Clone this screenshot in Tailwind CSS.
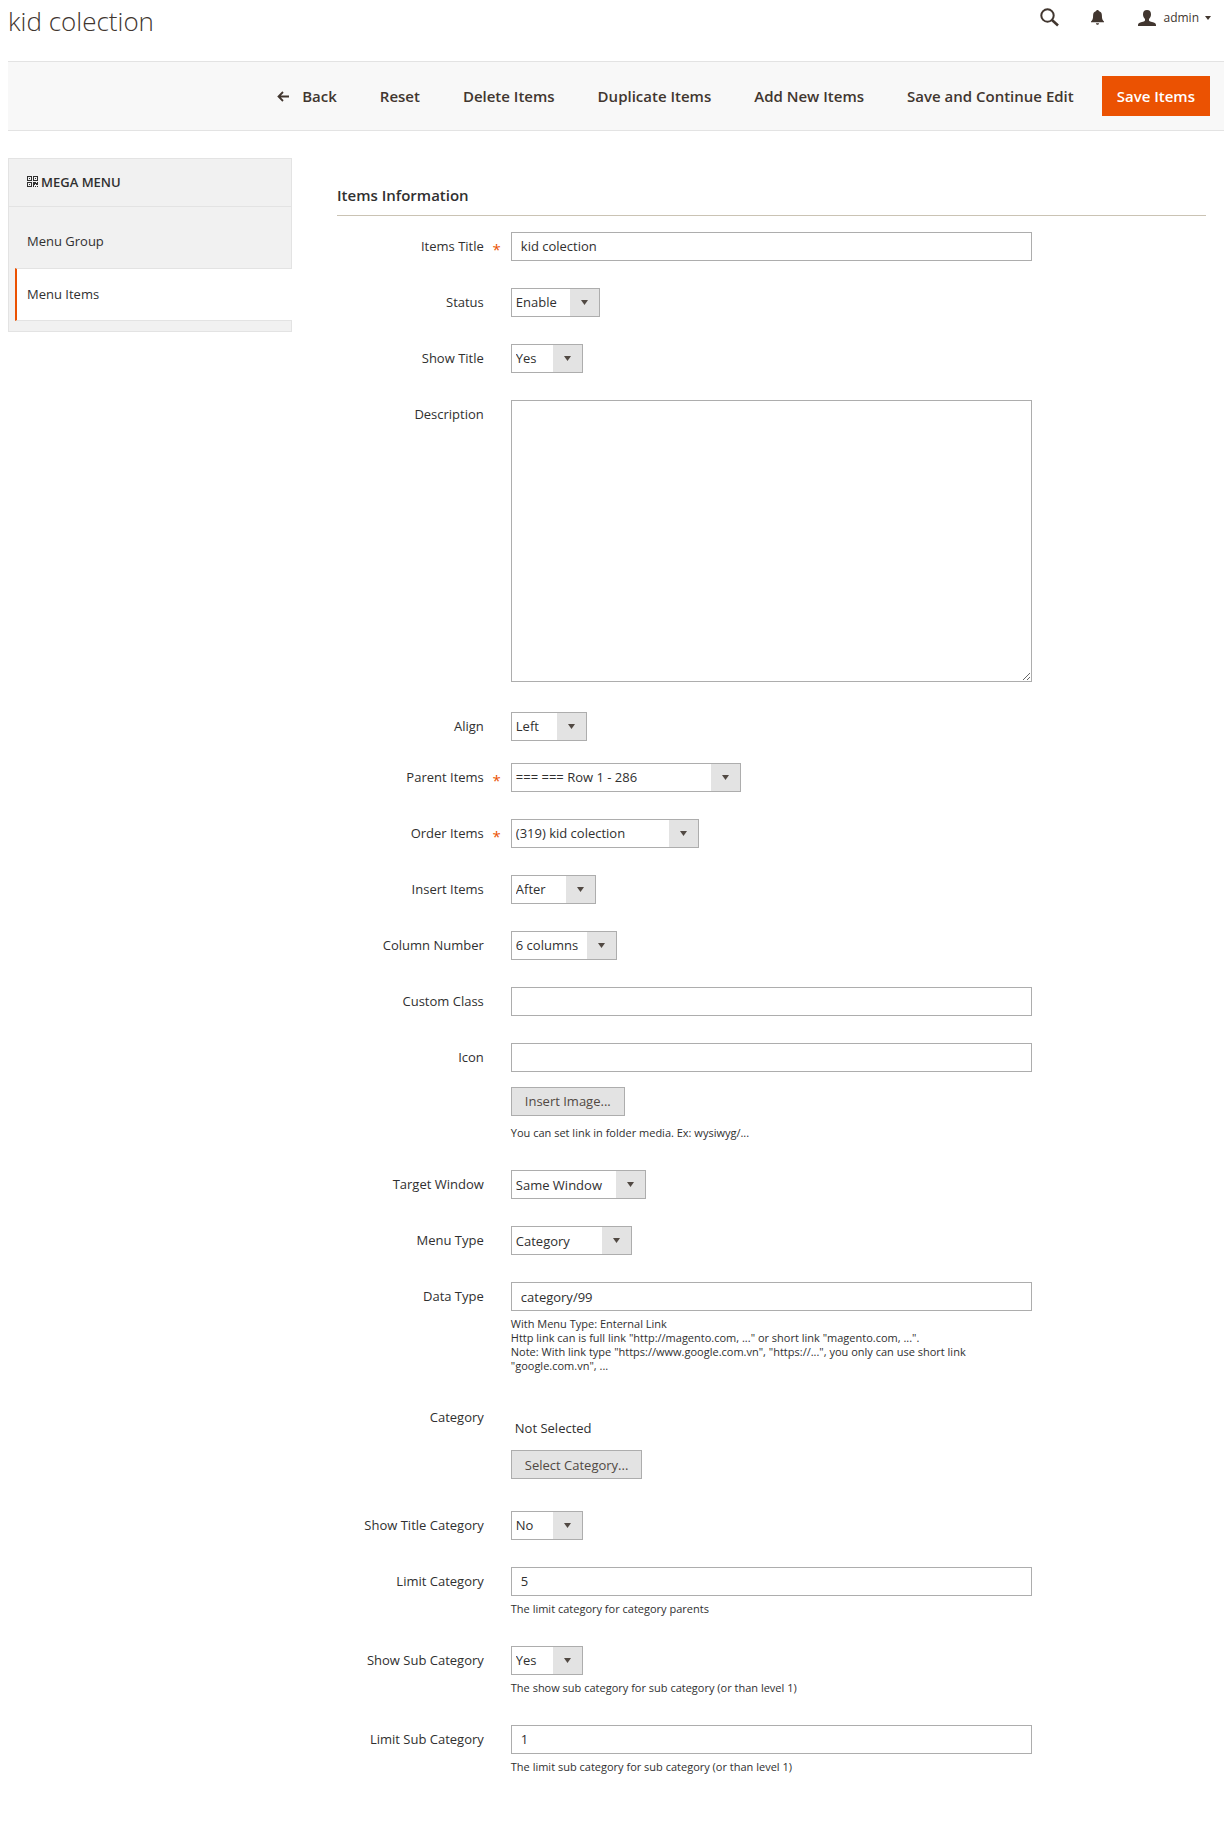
<!DOCTYPE html>
<html lang="en">
<head>
  <meta charset="UTF-8">
  <meta name="viewport" content="width=device-width, initial-scale=1.0">
  <title>kid colection</title>
  <script src="https://cdn.jsdelivr.net/npm/@tailwindcss/browser@4"></script>
</head>
<body class="bg-white font-['Open_Sans','Noto_Sans',sans-serif] text-[13px] leading-[18px] text-[#303030]">
  <!-- Page header -->
  <header class="flex h-[61px] items-start justify-between pl-2 pr-[15px]">
    <h1 class="pt-[3px] text-[26px] font-light leading-9 text-[#41362f]">kid colection</h1>
    <div class="flex items-center pt-2 text-[#41362f]">
      <button type="button" aria-label="Search" class="mr-8">
        <svg class="size-[19px]" viewBox="0 0 19 19" fill="none" stroke="currentColor"><circle cx="7.5" cy="7.5" r="6.2" stroke-width="2"/><path d="M12 12l6 5.5" stroke-width="2.6"/></svg>
      </button>
      <button type="button" aria-label="Notifications" class="mr-[34px]">
        <svg class="h-[15px] w-[13px]" viewBox="0 0 13 15" fill="currentColor"><path d="M6.500 0c.8 0 1.300.5 1.300 1.100 2 .6 3.100 2.200 3.100 4.300 0 3.300.6 5 2.100 6v.9H0v-.9c1.500-1 2.100-2.700 2.100-6 0-2.100 1.100-3.700 3.100-4.300C5.200.5 5.700 0 6.500 0zM4.900 13.200h3.200c0 .9-.7 1.500-1.600 1.500s-1.600-.6-1.600-1.500z"/></svg>
      </button>
      <button type="button" class="flex items-center">
        <svg class="mr-[7px] h-[16px] w-[18px]" viewBox="0 0 18 16" fill="currentColor"><path d="M9 0c2.600 0 4 1.600 4 4.200 0 1.900-.8 3.700-2 4.700v1.300c0 .6.400.9 1.200 1.200l3.600 1.200c1.500.5 2.200 1.300 2.200 2.700v.7H0v-.7c0-1.400.7-2.200 2.200-2.700l3.600-1.200c.8-.3 1.200-.6 1.200-1.200V8.900c-1.200-1-2-2.800-2-4.700C5 1.600 6.400 0 9 0z"/></svg>
        <span class="text-xs">admin</span>
        <svg class="ml-[6px] h-[4px] w-[6px]" viewBox="0 0 6 4" fill="currentColor"><path d="M0 0h6L3 4z"/></svg>
      </button>
    </div>
  </header>

  <!-- Actions toolbar -->
  <div class="ml-2 mr-[2px] flex h-[70px] items-center justify-end border-y border-[#e3e3e3] bg-[#f8f8f8] pr-[14px] text-[15px] font-semibold text-[#41362f]">
    <div class="mr-7 flex items-center gap-[43px]">
      <button type="button" class="flex items-center">
        <svg class="mr-[13px] h-[11px] w-[12px]" viewBox="0 0 12 11" fill="none" stroke="currentColor" stroke-width="1.800"><path d="M12 5.500H1.500M6 1L1.500 5.500 6 10"/></svg>
        Back
      </button>
      <button type="button">Reset</button>
      <button type="button">Delete Items</button>
      <button type="button">Duplicate Items</button>
      <button type="button">Add New Items</button>
      <button type="button">Save and Continue Edit</button>
    </div>
    <button type="button" class="h-10 bg-[#eb5202] px-[15px] text-white">Save Items</button>
  </div>

  <div class="flex items-start pl-2 pr-5 pt-[27px]">
    <!-- Side menu -->
    <nav class="w-[284px] shrink-0 border border-[#e3e3e3] bg-[#f1f1f1] pb-[10px]">
      <h2 class="flex h-12 items-center gap-[3px] border-b border-[#e3e3e3] pb-[2px] pl-[18px] font-semibold">
        <svg class="size-[11px]" viewBox="0 0 11 11" fill="currentColor"><path fill-rule="evenodd" d="M0 0h5v5H0zM1 1v3h3V1zM6 0h5v5H6zM7 1v3h3V1zM0 6h5v5H0zM1 7v3h3V7zM2 2h1v1H2zM8 2h1v1H8zM2 8h1v1H2zM6 6h3v1h1V6h1v3H9V8H8v1H7v2H6zM8 10h1v1H8zM10 10h1v1h-1z"/></svg>
        MEGA MENU
      </h2>
      <a href="#" class="mt-[9px] flex h-[52px] items-center pb-[2px] pl-[18px]">Menu Group</a>
      <a href="#" class="-mr-px ml-[6px] flex h-[53px] items-center border-y border-l-2 border-y-[#e3e3e3] border-l-[#eb5202] bg-white pb-[2px] pl-[10px] font-medium">Menu Items</a>
    </nav>

    <!-- Item form -->
    <form class="ml-[45px] min-w-0 flex-1 pt-[27px]">
      <h2 class="mb-4 flex h-[31px] items-start border-b border-[#cac3b4] text-[15px] leading-5 font-semibold">Items Information</h2>

      <div class="mb-[27px] flex">
        <label for="title" class="relative w-1/5 pr-[27px] pt-[5px] text-right font-medium">Items Title<span class="absolute right-[10px] top-[8px] text-[15px] font-normal text-[#eb5202]">*</span></label>
        <input id="title" type="text" value="kid colection" class="h-[29px] w-3/5 border border-[#adadad] px-[9px] pb-[2px]">
      </div>

      <div class="mb-[27px] flex">
        <label for="status" class="w-1/5 pr-[27px] pt-[5px] text-right font-medium">Status</label>
        <div class="relative h-[29px] w-[89px] border border-[#adadad]">
          <select id="status" class="size-full appearance-none pb-[2px] pl-1"><option>Enable</option><option>Disable</option></select>
          <span class="pointer-events-none absolute inset-y-0 right-0 flex w-[29px] items-center justify-center bg-[#e3e3e3] text-[#514943]"><svg class="h-[5px] w-[7px]" viewBox="0 0 7 5" fill="currentColor"><path d="M0 0h7L3.500 5z"/></svg></span>
        </div>
      </div>

      <div class="mb-[27px] flex">
        <label for="show-title" class="w-1/5 pr-[27px] pt-[5px] text-right font-medium">Show Title</label>
        <div class="relative h-[29px] w-[72px] border border-[#adadad]">
          <select id="show-title" class="size-full appearance-none pb-[2px] pl-1"><option>Yes</option><option>No</option></select>
          <span class="pointer-events-none absolute inset-y-0 right-0 flex w-[29px] items-center justify-center bg-[#e3e3e3] text-[#514943]"><svg class="h-[5px] w-[7px]" viewBox="0 0 7 5" fill="currentColor"><path d="M0 0h7L3.500 5z"/></svg></span>
        </div>
      </div>

      <div class="mb-[30px] flex">
        <label for="description" class="w-1/5 pr-[27px] pt-[5px] text-right font-medium">Description</label>
        <textarea id="description" class="h-[282px] w-3/5 resize border border-[#adadad] px-[9px] py-1"></textarea>
      </div>

      <div class="mb-[22px] flex">
        <label for="align" class="w-1/5 pr-[27px] pt-[5px] text-right font-medium">Align</label>
        <div class="relative h-[29px] w-[76px] border border-[#adadad]">
          <select id="align" class="size-full appearance-none pb-[2px] pl-1"><option>Left</option><option>Right</option></select>
          <span class="pointer-events-none absolute inset-y-0 right-0 flex w-[29px] items-center justify-center bg-[#e3e3e3] text-[#514943]"><svg class="h-[5px] w-[7px]" viewBox="0 0 7 5" fill="currentColor"><path d="M0 0h7L3.500 5z"/></svg></span>
        </div>
      </div>

      <div class="mb-[27px] flex">
        <label for="parent" class="relative w-1/5 pr-[27px] pt-[5px] text-right font-medium">Parent Items<span class="absolute right-[10px] top-[8px] text-[15px] font-normal text-[#eb5202]">*</span></label>
        <div class="relative h-[29px] w-[230px] border border-[#adadad]">
          <select id="parent" class="size-full appearance-none pb-[2px] pl-1"><option>=== === Row 1 - 286</option></select>
          <span class="pointer-events-none absolute inset-y-0 right-0 flex w-[29px] items-center justify-center bg-[#e3e3e3] text-[#514943]"><svg class="h-[5px] w-[7px]" viewBox="0 0 7 5" fill="currentColor"><path d="M0 0h7L3.500 5z"/></svg></span>
        </div>
      </div>

      <div class="mb-[27px] flex">
        <label for="order" class="relative w-1/5 pr-[27px] pt-[5px] text-right font-medium">Order Items<span class="absolute right-[10px] top-[8px] text-[15px] font-normal text-[#eb5202]">*</span></label>
        <div class="relative h-[29px] w-[188px] border border-[#adadad]">
          <select id="order" class="size-full appearance-none pb-[2px] pl-1"><option>(319) kid colection</option></select>
          <span class="pointer-events-none absolute inset-y-0 right-0 flex w-[29px] items-center justify-center bg-[#e3e3e3] text-[#514943]"><svg class="h-[5px] w-[7px]" viewBox="0 0 7 5" fill="currentColor"><path d="M0 0h7L3.500 5z"/></svg></span>
        </div>
      </div>

      <div class="mb-[27px] flex">
        <label for="insert" class="w-1/5 pr-[27px] pt-[5px] text-right font-medium">Insert Items</label>
        <div class="relative h-[29px] w-[85px] border border-[#adadad]">
          <select id="insert" class="size-full appearance-none pb-[2px] pl-1"><option>After</option><option>Before</option></select>
          <span class="pointer-events-none absolute inset-y-0 right-0 flex w-[29px] items-center justify-center bg-[#e3e3e3] text-[#514943]"><svg class="h-[5px] w-[7px]" viewBox="0 0 7 5" fill="currentColor"><path d="M0 0h7L3.500 5z"/></svg></span>
        </div>
      </div>

      <div class="mb-[27px] flex">
        <label for="columns" class="w-1/5 pr-[27px] pt-[5px] text-right font-medium">Column Number</label>
        <div class="relative h-[29px] w-[106px] border border-[#adadad]">
          <select id="columns" class="size-full appearance-none pb-[2px] pl-1"><option>6 columns</option></select>
          <span class="pointer-events-none absolute inset-y-0 right-0 flex w-[29px] items-center justify-center bg-[#e3e3e3] text-[#514943]"><svg class="h-[5px] w-[7px]" viewBox="0 0 7 5" fill="currentColor"><path d="M0 0h7L3.500 5z"/></svg></span>
        </div>
      </div>

      <div class="mb-[27px] flex">
        <label for="custom-class" class="w-1/5 pr-[27px] pt-[5px] text-right font-medium">Custom Class</label>
        <input id="custom-class" type="text" class="h-[29px] w-3/5 border border-[#adadad] px-[9px] pb-[2px]">
      </div>

      <div class="mb-[30px] flex">
        <label for="icon" class="w-1/5 pr-[27px] pt-[5px] text-right font-medium">Icon</label>
        <div class="w-3/5">
          <input id="icon" type="text" class="block h-[29px] w-full border border-[#adadad] px-[9px] pb-[2px]">
          <button type="button" class="mt-[15px] block h-[29px] border border-[#adadad] bg-[#e3e3e3] px-[13px] pb-[2px] font-medium text-[#514943]">Insert Image...</button>
          <p class="mt-[10px] text-[11px] leading-[14px]">You can set link in folder media. Ex: wysiwyg/...</p>
        </div>
      </div>

      <div class="mb-[27px] flex">
        <label for="target" class="w-1/5 pr-[27px] pt-[5px] text-right font-medium">Target Window</label>
        <div class="relative h-[29px] w-[135px] border border-[#adadad]">
          <select id="target" class="size-full appearance-none pl-1"><option>Same Window</option><option>New Window</option></select>
          <span class="pointer-events-none absolute inset-y-0 right-0 flex w-[29px] items-center justify-center bg-[#e3e3e3] text-[#514943]"><svg class="h-[5px] w-[7px]" viewBox="0 0 7 5" fill="currentColor"><path d="M0 0h7L3.500 5z"/></svg></span>
        </div>
      </div>

      <div class="mb-[27px] flex">
        <label for="menu-type" class="w-1/5 pr-[27px] pt-[5px] text-right font-medium">Menu Type</label>
        <div class="relative h-[29px] w-[121px] border border-[#adadad]">
          <select id="menu-type" class="size-full appearance-none pl-1"><option>Category</option><option>External Link</option></select>
          <span class="pointer-events-none absolute inset-y-0 right-0 flex w-[29px] items-center justify-center bg-[#e3e3e3] text-[#514943]"><svg class="h-[5px] w-[7px]" viewBox="0 0 7 5" fill="currentColor"><path d="M0 0h7L3.500 5z"/></svg></span>
        </div>
      </div>

      <div class="mb-[30px] flex">
        <label for="data-type" class="w-1/5 pr-[27px] pt-[5px] text-right font-medium">Data Type</label>
        <div class="w-3/5">
          <input id="data-type" type="text" value="category/99" class="block h-[29px] w-full border border-[#adadad] px-[9px]">
          <p class="mt-[6px] text-[11px] leading-[14px]">With Menu Type: Enternal Link<br>Http link can is full link "http://magento.com, ..." or short link "magento.com, ...".<br>Note: With link type "https://www.google.com.vn", "https://...", you only can use short link<br>"google.com.vn", ...</p>
        </div>
      </div>

      <div class="mb-8 flex">
        <label for="category" class="w-1/5 pr-[27px] pt-[5px] text-right font-medium">Category</label>
        <div class="w-3/5 pt-4">
          <p class="pl-1">Not Selected</p>
          <button id="category" type="button" class="mt-[13px] block h-[29px] border border-[#adadad] bg-[#e3e3e3] px-[13px] font-medium text-[#514943]">Select Category...</button>
        </div>
      </div>

      <div class="mb-[27px] flex">
        <label for="show-title-category" class="w-1/5 pr-[27px] pt-[5px] text-right font-medium">Show Title Category</label>
        <div class="relative h-[29px] w-[72px] border border-[#adadad]">
          <select id="show-title-category" class="size-full appearance-none pb-[2px] pl-1"><option>No</option><option>Yes</option></select>
          <span class="pointer-events-none absolute inset-y-0 right-0 flex w-[29px] items-center justify-center bg-[#e3e3e3] text-[#514943]"><svg class="h-[5px] w-[7px]" viewBox="0 0 7 5" fill="currentColor"><path d="M0 0h7L3.500 5z"/></svg></span>
        </div>
      </div>

      <div class="mb-[30px] flex">
        <label for="limit-category" class="w-1/5 pr-[27px] pt-[5px] text-right font-medium">Limit Category</label>
        <div class="w-3/5">
          <input id="limit-category" type="text" value="5" class="block h-[29px] w-full border border-[#adadad] px-[9px] pb-[2px]">
          <p class="mt-[6px] text-[11px] leading-[14px]">The limit category for category parents</p>
        </div>
      </div>

      <div class="mb-[30px] flex">
        <label for="show-sub" class="w-1/5 pr-[27px] pt-[5px] text-right font-medium">Show Sub Category</label>
        <div class="w-3/5">
          <div class="relative h-[29px] w-[72px] border border-[#adadad]">
            <select id="show-sub" class="size-full appearance-none pb-[2px] pl-1"><option>Yes</option><option>No</option></select>
            <span class="pointer-events-none absolute inset-y-0 right-0 flex w-[29px] items-center justify-center bg-[#e3e3e3] text-[#514943]"><svg class="h-[5px] w-[7px]" viewBox="0 0 7 5" fill="currentColor"><path d="M0 0h7L3.500 5z"/></svg></span>
          </div>
          <p class="mt-[6px] text-[11px] leading-[14px]">The show sub category for sub category (or than level 1)</p>
        </div>
      </div>

      <div class="mb-[30px] flex">
        <label for="limit-sub" class="w-1/5 pr-[27px] pt-[5px] text-right font-medium">Limit Sub Category</label>
        <div class="w-3/5">
          <input id="limit-sub" type="text" value="1" class="block h-[29px] w-full border border-[#adadad] px-[9px] pb-[2px]">
          <p class="mt-[6px] text-[11px] leading-[14px]">The limit sub category for sub category (or than level 1)</p>
        </div>
      </div>
    </form>
  </div>
</body>
</html>
